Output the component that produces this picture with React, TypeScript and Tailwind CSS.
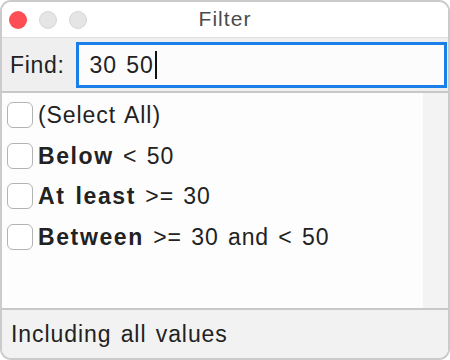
export default function App() {
  const rows = [
    { bold: "", rest: "(Select All)" },
    { bold: "Below", rest: " < 50" },
    { bold: "At least", rest: " >= 30" },
    { bold: "Between", rest: " >= 30 and < 50" },
  ];

  return (
    <div className="h-[360px] w-[450px] bg-white font-['Liberation_Sans',Arial,sans-serif] text-[#222]">
      <div className="flex h-full flex-col overflow-hidden rounded-[11px] border-2 border-[#cbcbcb]">

        {/* Title bar */}
        <div className="relative flex h-[36px] shrink-0 items-center border-b border-[#dedede] bg-white">
          <div className="flex items-center gap-[12px] pl-[7px]">
            <span className="h-[18px] w-[18px] rounded-full bg-[#fe4e55]" />
            <span className="h-[18px] w-[18px] rounded-full border border-[#d6d6d6] bg-[#e5e5e5]" />
            <span className="h-[18px] w-[18px] rounded-full border border-[#d6d6d6] bg-[#e5e5e5]" />
          </div>
          <div className="absolute inset-0 flex items-center justify-center pb-[1px] text-[21px] tracking-[0.05em] text-[#4b4b4b]">
            Filter
          </div>
        </div>

        {/* Find row */}
        <div className="flex h-[53px] shrink-0 items-center gap-[11px] bg-[#efefef] pl-[8px] pr-[1px] pt-[1px]">
          <span className="text-[23px] tracking-[0.03em]">Find:</span>
          <div className="flex h-[46px] flex-1 items-center border-[3px] border-[#1a7fe8] bg-[#fcfcfc] pl-[11px] text-[23px] tracking-[0.04em] [word-spacing:2px]">
            30 50
            <span className="ml-[1px] h-[28px] w-[2px] bg-[#111]" />
          </div>
        </div>

        <div className="h-[2px] shrink-0 bg-[#c8c8c8]" />

        {/* List */}
        <div className="flex flex-1">
          <div className="flex-1 bg-[#fdfdfd] pl-[5px] pt-[2px]">
            {rows.map((r) => (
              <div key={r.rest} className="flex h-[40.5px] items-center gap-[5px] text-[23px] tracking-[0.04em] [word-spacing:2px]">
                <span className="h-[26px] w-[26px] shrink-0 rounded-[6px] border-[1.5px] border-[#b3b3b3] bg-white" />
                <span className="whitespace-pre">
                  {r.bold && <b className="font-bold tracking-[0.07em]">{r.bold}</b>}
                  {r.rest}
                </span>
              </div>
            ))}
          </div>
          <div className="w-[25px] bg-[#f3f3f3]" />
        </div>

        <div className="h-[2px] shrink-0 bg-[#c8c8c8]" />

        {/* Footer */}
        <div className="flex h-[48px] shrink-0 items-center bg-[#f2f2f2] pl-[9px] text-[23px] tracking-[0.04em] [word-spacing:2px]">
          Including all values
        </div>
      </div>
    </div>
  );
}
